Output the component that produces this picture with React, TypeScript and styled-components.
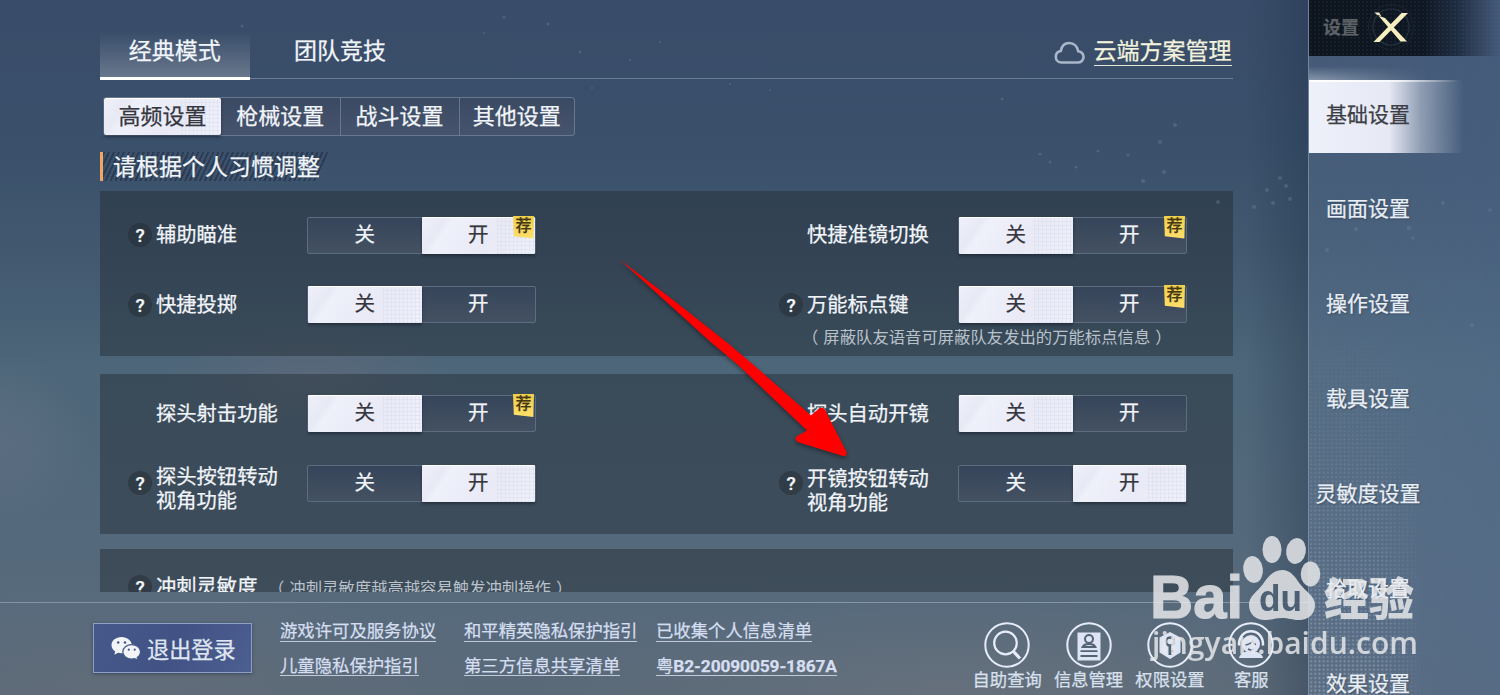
import * as React from "react"
import styled, { createGlobalStyle, css } from "styled-components"

const GlobalStyle = createGlobalStyle`
  * {
    box-sizing: border-box;
  }
  body {
    margin: 0;
    overflow: hidden;
    font-family: Roboto, "Noto Sans CJK SC", sans-serif;
    color: #f1f5fa;
    -webkit-text-stroke: 0.25px;
  }
`;

const whiteFace = css`
  color: #35363e;
  background:
    repeating-linear-gradient(90deg, rgba(205, 212, 228, 0.3) 0 1px, transparent 1px 4px) right / 34% 100% no-repeat,
    repeating-linear-gradient(180deg, rgba(205, 212, 228, 0.3) 0 1px, transparent 1px 4px) right / 34% 100% no-repeat,
    linear-gradient(125deg, #eff0fa 0%, #e7e9f4 18%, #eef0fa 24%, #e9eaf6 60%, #eff1fb 100%);
  box-shadow: 0 2px 3px rgba(20, 28, 40, 0.55), inset 0 1px 0 #fff;
`;

const Screen = styled.div`
  position: relative;
  display: grid;
  grid-template-columns: 1308px 192px;
  width: 1500px;
  height: 695px;
  overflow: hidden;
  background:
    radial-gradient(ellipse 150px 60px at 310px 375px, rgba(112, 108, 124, 0.35), transparent),
    radial-gradient(ellipse 90px 90px at 0px 440px, rgba(112, 122, 140, 0.35), transparent),
    radial-gradient(ellipse 340px 110px at 130px 690px, rgba(120, 118, 124, 0.25), transparent),
    radial-gradient(ellipse 420px 90px at 960px 690px, rgba(128, 128, 132, 0.3), transparent),
    linear-gradient(180deg, #394c69 0%, #3a506b 20%, #41586f 36%, #4d6679 53%, #53687b 72%, #576a7c 88%, #5a6978 100%);
`;

const Main = styled.main`
  display: flex;
  flex-direction: column;
  height: 695px;
  background: linear-gradient(90deg, transparent 1245px, rgba(25, 42, 65, 0.3) 100%);
`;

const Content = styled.div`
  height: 592px;
  padding: 24px 75px 0 100px;
  overflow: hidden;
`;

const TabRow = styled.nav`
  display: flex;
  height: 56px;
  background: linear-gradient(rgba(140, 158, 180, 0.6), rgba(140, 158, 180, 0.6)) 0 54px / 100% 1px no-repeat;
`;

const Tab = styled.a<{ $active?: boolean }>`
  width: ${p => (p.$active ? "149.5px" : "181px")};
  height: 56px;
  line-height: 56px;
  font-size: 23px;
  text-align: center;
  ${p => p.$active && css`
    border-bottom: 3px solid #fff;
    background: linear-gradient(180deg, transparent 8px, rgba(150, 160, 175, 0.5) 100%);
  `}
`;

const CloudLink = styled.a`
  display: flex;
  align-items: center;
  gap: 9px;
  height: 55px;
  margin-left: auto;
  margin-right: 1.5px;
  color: #f3f2dc;
  font-size: 23px;
  span {
    height: 26px;
    line-height: 24px;
    border-bottom: 1.5px solid #e3e4d4;
    margin-top: 2px;
  }
  svg {
    margin-top: 3px;
  }
`;

const SubTabs = styled.div`
  display: grid;
  grid-template-columns: 117px 119.5px 119px 1fr;
  width: 472px;
  height: 39px;
  margin: 17px 0 0 3px;
  border: 1px solid #66788f;
  border-radius: 3px;
  background: linear-gradient(180deg, #3b4a63, #46536c);
`;

const SubTab = styled.div<{ $active?: boolean }>`
  line-height: 37px;
  font-size: 22px;
  text-align: center;
  border-right: 1px solid #66788f;
  &:last-child {
    border: 0;
  }
  ${p => p.$active && css`
    border: 0;
    border-radius: 2px;
    ${whiteFace}
  `}
`;

const SectionTitle = styled.h2`
  width: 228px;
  height: 29px;
  margin: 16px 0 10px;
  padding-left: 10px;
  border-left: 3px solid #f2a65e;
  font-size: 23px;
  font-weight: 400;
  line-height: 31px;
  white-space: nowrap;
  background: repeating-linear-gradient(115deg, #2b3c54 0 2px, transparent 2px 4.5px);
  clip-path: polygon(0 0, 100% 0, 95.5% 100%, 0 100%);
`;

const Panel = styled.section<{ $top: number; $height: number; $gap?: number }>`
  display: grid;
  grid-template-columns: 408px 409px;
  grid-auto-rows: 38px;
  column-gap: 243px;
  row-gap: 31.5px;
  height: ${p => p.$height}px;
  padding: ${p => p.$top}px 0 0 28px;
  margin-bottom: ${p => p.$gap || 0}px;
  background: rgba(37, 45, 53, 0.47);
`;

const SettingBox = styled.div`
  display: flex;
  align-items: center;
  height: 38px;
`;

const Help = styled.span<{ $hidden?: boolean }>`
  flex: none;
  width: 24px;
  height: 24px;
  margin-right: 4px;
  border-radius: 50%;
  background: rgba(35, 43, 50, 0.5);
  font-size: 19px;
  font-weight: 500;
  line-height: 25px;
  text-align: center;
  visibility: ${p => (p.$hidden ? "hidden" : "visible")};
`;

const Label = styled.span<{ $drop?: number }>`
  flex: 0 0 151px;
  width: 151px;
  padding-top: ${p => p.$drop || 0}px;
  font-size: 20.3px;
  line-height: 24px;
  white-space: pre;
`;

const Note = styled.p<{ $inline?: boolean }>`
  margin: ${p => (p.$inline ? "3px 0 0 -34px" : "3px 0 0 28px")};
  color: #b9c2cb;
  font-size: 16.35px;
  line-height: 22px;
  white-space: nowrap;
  -webkit-text-stroke: 0;
`;

const Paren = styled.span<{ $close?: boolean }>`
  margin: 0 ${p => (p.$close ? "-5px 0 5px" : "5px 0 -5px")};
`;

const Switch = styled.div`
  position: relative;
  display: grid;
  grid-template-columns: 1fr 1fr;
  flex: none;
  width: 229px;
  height: 37px;
  border: 1px solid #5c6d7f;
  border-radius: 2px;
  background: linear-gradient(180deg, #36455a, #445162);
`;

const Choice = styled.span<{ $on: boolean }>`
  font-size: 20.5px;
  line-height: 35px;
  text-align: center;
  border-radius: 1px;
  ${p => p.$on && css`
    ${whiteFace}
    margin: -1px 0;
    line-height: 37px;
  `}
`;

const Badge = styled.em`
  position: absolute;
  top: -2px;
  right: 1px;
  width: 21px;
  height: 23px;
  background: linear-gradient(180deg, #f0cf4c, #ffdf6b);
  clip-path: polygon(0 0, 100% 0, 97% 100%, 4% 90%);
  color: #443714;
  font-size: 16px;
  font-style: normal;
  font-weight: 500;
  line-height: 20px;
  text-align: center;
`;

const Footer = styled.footer`
  display: flex;
  height: 93px;
  margin-top: 10px;
  padding: 20px 0 0 93px;
  border-top: 1px solid #8794a3;
`;

const Logout = styled.button`
  display: flex;
  align-items: center;
  gap: 6px;
  width: 159px;
  height: 50px;
  padding: 0 0 0 17px;
  border: 1px solid #8ba0c6;
  background: linear-gradient(120deg, #46588a, #425284 50%, #4d5e91);
  box-shadow: 0 1px 3px rgba(25, 35, 60, 0.5);
  color: #dfe5f1;
  font-family: inherit;
  font-size: 22.2px;
`;

const Links = styled.div`
  display: grid;
  grid-template-columns: 184px 192px 190px;
  grid-auto-rows: 34.5px;
  justify-items: start;
  margin: -2px 0 0 28px;
`;

const FootLink = styled.a`
  height: 20.5px;
  border-bottom: 1.5px solid #c0cad9;
  color: #d5def0;
  font-size: 17.35px;
  line-height: 20px;
  white-space: nowrap;
  b {
    font-weight: 700;
    letter-spacing: -0.13px;
  }
`;

const Tools = styled.div`
  display: flex;
  margin: -2px 16px 0 auto;
`;

const Tool = styled.div`
  display: flex;
  flex-direction: column;
  align-items: center;
  width: 81.4px;
  color: #d9e0ee;
  font-size: 17.3px;
  line-height: 22px;
  white-space: nowrap;
`;

const Side = styled.aside`
  position: relative;
  display: flex;
  flex-direction: column;
  height: 695px;
  border-left: 1px solid rgba(150, 167, 188, 0.55);
  background: linear-gradient(100deg, rgba(107, 130, 162, 0.24), rgba(82, 109, 147, 0.45));
  &::before {
    content: "";
    position: absolute;
    inset: 320px 75px 0 0;
    background: radial-gradient(circle, rgba(210, 220, 232, 0.32) 0.8px, transparent 1.3px) 0 0 / 4.2px 4.2px;
    mask-image: linear-gradient(180deg, transparent, #000), linear-gradient(90deg, #000 60%, transparent);
    mask-composite: intersect;
  }
`;

const SideHead = styled.header`
  display: flex;
  align-items: center;
  height: 56px;
  flex: none;
  padding-left: 14px;
  gap: 7px;
  color: #5c6168;
  font-size: 18px;
  font-weight: 700;
  background:
    radial-gradient(circle, rgba(90, 105, 120, 0.12) 0.8px, transparent 1.2px) 0 0 / 4px 4px,
    linear-gradient(90deg, #0d141d 0%, #0e1723 60%, rgba(19, 31, 49, 0.75) 78%, transparent 100%);
  span {
    margin-top: -4px;
  }
`;

const SideList = styled.div`
  position: relative;
  display: flex;
  flex-direction: column;
  height: 639px;
  padding-top: 12px;
`;

const SideItem = styled.a<{ $active?: boolean }>`
  flex: 0 0 95px;
  display: flex;
  align-items: center;
  font-size: 21px;
  color: #e8eef5;
  text-shadow: 1px 1px 2px rgba(30, 42, 58, 0.5);
  span {
    width: 118px;
    margin-top: -7px;
    text-align: center;
  }
  ${p => p.$active && css`
    flex-basis: 73px;
    margin: 12px 0 10px;
    color: #3c3e46;
    text-shadow: none;
    background:
      linear-gradient(90deg, #fff, rgba(255, 255, 255, 0.7) 90px, transparent 150px) 0 0 / 100% 2px no-repeat,
      linear-gradient(90deg, #eef0fa 0, #e6e8f4 80px, rgba(215, 222, 235, 0.5) 112px, transparent 155px);
    &::before {
      content: "";
      position: absolute;
      top: 10px;
      left: 0;
      width: 120px;
      height: 14px;
      background: linear-gradient(0deg, rgba(235, 240, 250, 0.4), transparent);
      mask-image: linear-gradient(90deg, #000, transparent);
    }
  `}
`;

const Pointer = styled.svg`
  position: absolute;
  left: 600px;
  top: 245px;
  filter: drop-shadow(0 2px 2px rgba(0, 0, 0, 0.4));
`;

const Watermark = styled.svg`
  position: absolute;
  left: 1140px;
  top: 525px;
  opacity: 0.83;
`;

const Stars = styled.svg`
  position: absolute;
  left: 0;
  top: 0;
  pointer-events: none;
`;

const CloudIcon = () => (
  <svg width="31" height="24" viewBox="0 0 31 24" fill="none" stroke="#aab7c9" strokeWidth="2.6">
    <path d="M7.5 21.5h16a5.6 5.6 0 0 0 .8-11.2C23.4 6 20.2 2 15.2 2 10.6 2 7.6 5.4 6.8 10 3.6 10.6 1.8 12.8 1.8 15.7c0 3.3 2.4 5.8 5.7 5.8z" />
  </svg>
);

const WechatIcon = () => (
  <svg width="30" height="25" viewBox="0 0 30 25">
    <path fill="#f2f4f7" d="M10.6 1C4.8 1 .5 4.6.5 9.2c0 2.6 1.4 4.8 3.7 6.3L3.3 18.8l3.8-2c1.1.3 2.3.5 3.5.5 5.7 0 10.2-3.6 10.2-8.1S16.3 1 10.6 1z" />
    <path fill="#f2f4f7" stroke="#46578a" strokeWidth="1.2" d="M20.7 8.6c-5 0-8.9 3.2-8.9 7.2s3.900 7.3 8.900 7.3c1.1 0 2.1-.2 3-.4l3.3 1.700-.8-2.900c2.1-1.400 3.400-3.400 3.400-5.700 0-4-4-7.200-8.900-7.200z" />
    <g fill="#46578a">
      <circle cx="7.2" cy="6.5" r="1.3" />
      <circle cx="14" cy="6.5" r="1.3" />
      <circle cx="17.8" cy="13.7" r="1.1" />
      <circle cx="23.7" cy="13.7" r="1.1" />
    </g>
  </svg>
);

const CloseIcon = () => (
  <svg width="50" height="52" viewBox="0 0 50 52">
    <circle cx="25" cy="25" r="18" fill="none" stroke="#26343f" strokeWidth="1.2" />
    <circle cx="25" cy="25" r="22.500" fill="none" stroke="#1b2631" />
    <path fill="#f6eec0" d="M8.500 10.500h4.500l2.500 3.700-5-1.700zM12.500 13.700l6.500 2.300 22 23.500h-6.500zM35.500 11h6.500L13.500 40H7.500z" />
  </svg>
);

const Ring = ({ children }: { children: React.ReactNode }) => (
  <svg width="46" height="48" viewBox="0 0 46 48" fill="none" stroke="#e7edf8" strokeWidth="2">
    <circle cx="23" cy="24" r="21.700" />
    {children}
  </svg>
);

const toolIcons = {
  search: (
    <Ring>
      <circle cx="21.500" cy="22" r="11.300" strokeWidth="2.200" />
      <path d="M29.500 30.500l6.500 7" strokeWidth="3.200" />
    </Ring>
  ),
  card: (
    <Ring>
      <path d="M11.500 11.500h23v28h-23z" fill="#dde4f3" stroke="none" />
      <circle cx="23" cy="18" r="4" stroke="#536376" />
      <path d="M16.500 26c1-2 3-3 6.500-3s5.500 1 6.500 3zM14.500 30.200h17M14.500 35h17" stroke="#536376" strokeWidth="1.800" />
    </Ring>
  ),
  shield: (
    <Ring>
      <path d="M23 11l10.500 5.500v15L23 38l-10.500-6.500v-15z" fill="#dde4f3" stroke="none" />
      <path d="M23 34V24.500M23 30h4" stroke="#536376" strokeWidth="3" />
      <circle cx="23" cy="20.500" r="4" stroke="#536376" strokeWidth="2.500" />
    </Ring>
  ),
  service: (
    <Ring>
      <path d="M11 24.500c-1-19 25-19 24 0" strokeWidth="2.500" />
      <circle cx="23" cy="23" r="9" fill="#dde4f3" stroke="none" />
      <path d="M11 37c1-4 4-5.500 7-6.500h10c3 1 6 2.500 7 6.500z" fill="#dde4f3" stroke="none" />
      <path d="M17.500 24q5.500-1 7-4 1 3 3.500 3.500M20 28q3 1.800 6 0" stroke="#536376" strokeWidth="1.500" />
    </Ring>
  ),
};

interface SettingProps {
  label: string;
  on: boolean;
  help?: boolean;
  recommended?: boolean;
  drop?: number;
}

const Setting = ({ label, on, help, recommended, drop }: SettingProps) => (
  <SettingBox>
    <Help $hidden={!help}>{help ? "?" : ""}</Help>
    <Label $drop={drop}>{label}</Label>
    <Switch>
      <Choice $on={!on}>关</Choice>
      <Choice $on={on}>开</Choice>
      {recommended && <Badge>荐</Badge>}
    </Switch>
  </SettingBox>
);

const stars = [
  [242, 26, 1.5], [504, 17, 1.5], [548, 24, 1.5], [484, 33, 1], [580, 52, 1.5], [592, 88, 1], [630, 60, 1], [660, 42, 1],
  [730, 84, 1], [770, 90, 1], [1002, 99, 1.5], [1175, 125, 2], [1160, 142, 2], [1128, 155, 1.5], [1098, 151, 1.5],
  [1050, 162, 1.5], [1164, 172, 2], [1143, 181, 2], [1040, 154, 1.5], [1076, 167, 1.5], [1280, 178, 2], [1286, 186, 2],
  [1267, 190, 2], [1254, 207, 2], [1273, 203, 2], [1290, 199, 2], [1218, 202, 2], [1443, 203, 2], [1490, 210, 2],
  [1409, 228, 2.3], [1356, 229, 2], [1413, 238, 1.8], [1327, 250, 2], [1472, 325, 2],
];

const footLinks = ["游戏许可及服务协议", "和平精英隐私保护指引", "已收集个人信息清单", "儿童隐私保护指引", "第三方信息共享清单"];
const sideItems = ["基础设置", "画面设置", "操作设置", "载具设置", "灵敏度设置", "拾取设置", "效果设置"];

export default function App() {
  return (
    <Screen>
      <GlobalStyle />
      <Stars width="1500" height="400">
        {stars.map(([x, y, r]) => <circle key={`${x}-${y}`} cx={x} cy={y} r={r} fill="#86a9bd" opacity="0.25" />)}
      </Stars>
      <Main>
        <Content>
          <TabRow>
            <Tab $active>经典模式</Tab>
            <Tab>团队竞技</Tab>
            <CloudLink><CloudIcon /><span>云端方案管理</span></CloudLink>
          </TabRow>
          <SubTabs>
            <SubTab $active>高频设置</SubTab>
            <SubTab>枪械设置</SubTab>
            <SubTab>战斗设置</SubTab>
            <SubTab>其他设置</SubTab>
          </SubTabs>
          <SectionTitle>请根据个人习惯调整</SectionTitle>

          <Panel $top={25} $height={165} $gap={18}>
            <Setting label="辅助瞄准" on help recommended />
            <Setting label="快捷准镜切换" on={false} recommended />
            <Setting label="快捷投掷" on={false} help />
            <div>
              <Setting label="万能标点键" on={false} help recommended />
              <Note><Paren>（</Paren>屏蔽队友语音可屏蔽队友发出的万能标点信息<Paren $close>）</Paren></Note>
            </div>
          </Panel>

          <Panel $top={20.5} $height={160} $gap={15}>
            <Setting label="探头射击功能" on={false} recommended />
            <Setting label="探头自动开镜" on={false} />
            <Setting label={"探头按钮转动\n视角功能"} on help drop={12} />
            <Setting label={"开镜按钮转动\n视角功能"} on help drop={16} />
          </Panel>

          <Panel $top={19} $height={90}>
            <SettingBox>
              <Help>?</Help>
              <Label>冲刺灵敏度</Label>
              <Note $inline><Paren>（</Paren>冲刺灵敏度越高越容易触发冲刺操作<Paren $close>）</Paren></Note>
            </SettingBox>
          </Panel>
        </Content>

        <Footer>
          <Logout><WechatIcon />退出登录</Logout>
          <Links>
            {footLinks.map(text => <FootLink key={text}>{text}</FootLink>)}
            <FootLink>粤<b>B2-20090059-1867A</b></FootLink>
          </Links>
          <Tools>
            <Tool>{toolIcons.search}自助查询</Tool>
            <Tool>{toolIcons.card}信息管理</Tool>
            <Tool>{toolIcons.shield}权限设置</Tool>
            <Tool>{toolIcons.service}客服</Tool>
          </Tools>
        </Footer>
      </Main>

      <Side>
        <SideHead><span>设置</span><CloseIcon /></SideHead>
        <SideList>
          {sideItems.map((text, index) => (
            <SideItem key={text} $active={index === 0}><span>{text}</span></SideItem>
          ))}
        </SideList>
      </Side>

      <Pointer width="260" height="225" viewBox="600 245 260 225">
        <path
          fill="#fe0000"
          d="M619 259L677 303L727 342.500L753 364.500L811 415.500L818.500 409Q822.500 406 825 410L846.500 452Q847.500 457 843 456L797.500 442Q794 439 796.500 436.500L807 430.500L738 365L710 341.500L672 307Z"
        />
      </Pointer>

      <Watermark width="290" height="150" viewBox="1140 525 290 150">
        <g fill="#e9eaec">
          <text x="1150" y="618" fontFamily="Liberation Sans, sans-serif" fontWeight="700" fontSize="62" textLength="93" lengthAdjust="spacingAndGlyphs" stroke="#e9eaec" strokeWidth="1.200">Bai</text>
          <ellipse cx="1253" cy="569.500" rx="9.800" ry="13.500" transform="rotate(-8 1253 569)" />
          <ellipse cx="1272" cy="549.500" rx="9.500" ry="13.500" />
          <ellipse cx="1296" cy="551" rx="9.800" ry="13" transform="rotate(10 1296 551)" />
          <ellipse cx="1310.500" cy="574" rx="9.800" ry="12.500" />
          <path d="M1282 570c9 0 13 7 18 14 6 8 15 12 15 21 0 9-7 15-16 15-7 0-10-2-17-2s-10 2-17 2c-9 0-16-6-16-15 0-9 8-13 14-21 5-7 10-14 19-14z" />
          <text x="1324" y="616" fontFamily="Noto Sans CJK SC, sans-serif" fontWeight="900" fontSize="45">经验</text>
          <text x="1152" y="654" fontFamily="Open Sans, sans-serif" fontWeight="600" fontSize="31" textLength="266" lengthAdjust="spacingAndGlyphs">jingyan.baidu.com</text>
        </g>
        <text x="1259" y="611" fontFamily="Liberation Sans, sans-serif" fontWeight="700" fontSize="36" textLength="43" lengthAdjust="spacingAndGlyphs" fill="#4d6075">du</text>
      </Watermark>
    </Screen>
  )
}
